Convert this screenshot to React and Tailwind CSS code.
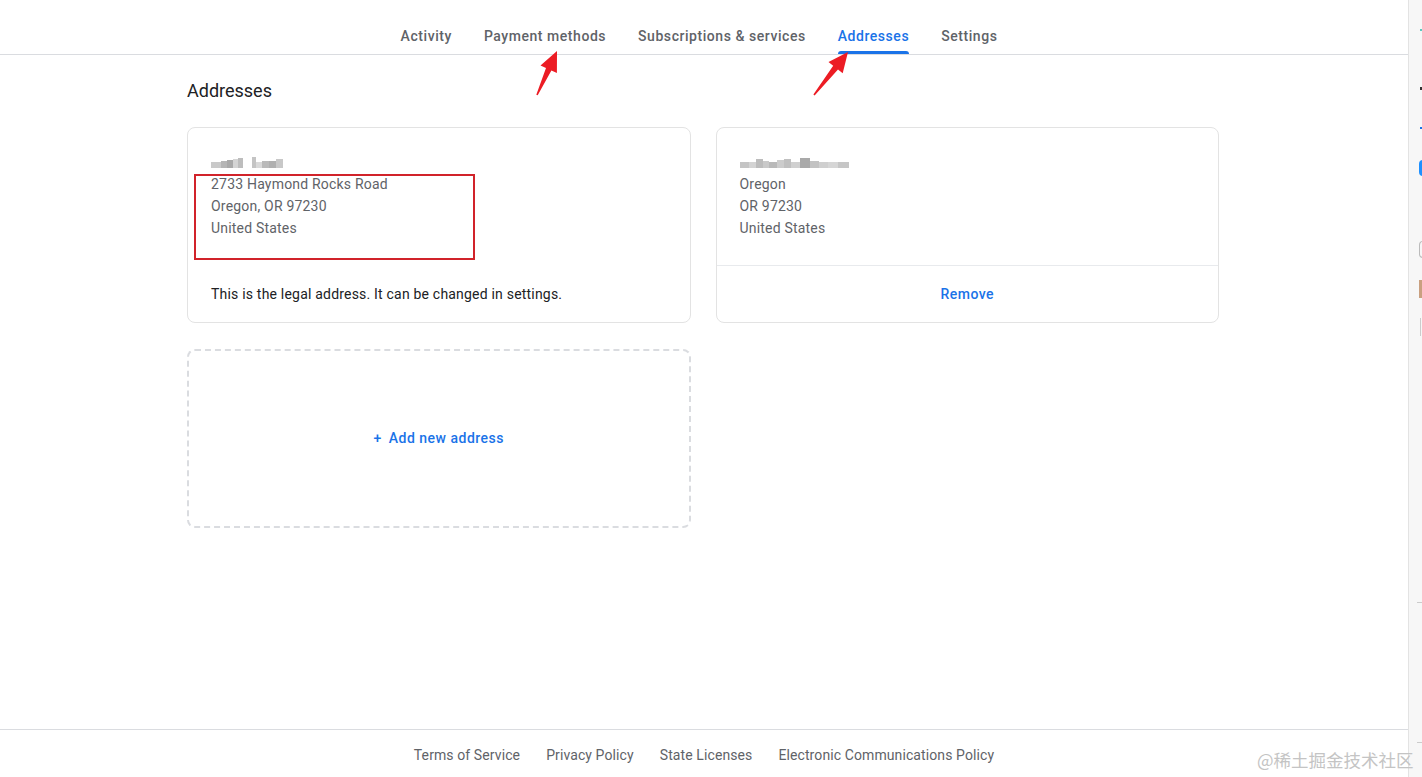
import React from 'react'

const tabs = ['Activity', 'Payment methods', 'Subscriptions & services', 'Addresses', 'Settings']

// 모자이크 처리된 이름
function Pixelated({ blocks }) {
  return (
    <div className="flex items-end h-[22px] pb-[5px]">
      {blocks.map(([w, h, c], i) => (
        <span key={i} style={{ width: w, height: h, background: c }} className="inline-block" />
      ))}
    </div>
  )
}

const name1 = [
  [10, 6, '#c9c9c9'], [6, 7, '#b5b5b5'], [6, 8, '#a9a9a9'], [5, 9, '#d4d4d4'], [5, 10, '#bdbdbd'],
  [9, 3, '#ffffff'], [4, 11, '#c4c4c4'], [6, 6, '#d9d9d9'], [7, 7, '#bababa'], [7, 7, '#b0b0b0'], [7, 9, '#c8c8c8']
]
const name2 = [
  [9, 6, '#c4c4c4'], [7, 6, '#d3d3d3'], [7, 9, '#bcbcbc'], [6, 7, '#c9c9c9'], [8, 6, '#b9b9b9'],
  [7, 8, '#cccccc'], [7, 9, '#c0c0c0'], [9, 6, '#d0d0d0'], [10, 10, '#a9a9a9'], [9, 7, '#c2c2c2'],
  [9, 6, '#cfcfcf'], [10, 6, '#d6d6d6'], [11, 6, '#c6c6c6']
]

function App() {
  return (
    <div className="relative flex w-full min-h-[777px] bg-white text-[14px]" style={{ fontFamily: 'Roboto, "Liberation Sans", sans-serif' }}>
      <div className="flex-1 flex flex-col min-h-[777px]">
        {/* 탭 */}
        <nav className="h-[55px] border-b border-[#dadce0] flex justify-center pr-[10px]">
          <div className="flex gap-8 tracking-[0.55px]">
            {tabs.map((t) => (
              <div key={t} className="flex flex-col items-stretch pt-[26px]">
                <span className={`leading-5 font-medium ${t === 'Addresses' ? 'text-[#1a73e8]' : 'text-[#5f6368]'}`}>{t}</span>
                <span className={`mt-[5px] h-[3px] rounded-t-[3px] ${t === 'Addresses' ? 'bg-[#1a73e8]' : 'bg-transparent'}`} />
              </div>
            ))}
          </div>
        </nav>

        <main className="flex-1 pr-[2px]">
          <div className="w-[1032px] mx-auto tracking-[0.2px]">
            <h2 className="mt-[24px] text-[18px] leading-6 text-[#202124] tracking-normal">Addresses</h2>

            <div className="mt-[24px] grid grid-cols-2 gap-x-[25px] gap-y-[26px]">
              {/* 첫번째 주소 */}
              <div className="relative h-[196px] border border-[#e3e3e3] rounded-[8px] flex flex-col">
                <div className="pt-[23px] pl-[23px] pb-[26px] leading-[22px] text-[#5f6368] border-b border-transparent">
                  <Pixelated blocks={name1} />
                  <div>2733 Haymond Rocks Road</div>
                  <div>Oregon, OR 97230</div>
                  <div>United States</div>
                </div>
                <div className="flex-1 flex items-center pl-[23px] pt-[1px] text-[#202124]">
                  This is the legal address. It can be changed in settings.
                </div>
                <div className="absolute left-[6px] top-[46px] w-[281px] h-[86px] border-2 border-[#d1232a]" />
              </div>

              {/* 두번째 주소 */}
              <div className="h-[196px] border border-[#e3e3e3] rounded-[8px] flex flex-col">
                <div className="pt-[23px] pl-[23px] pb-[26px] leading-[22px] text-[#5f6368] border-b border-[#e8eaed]">
                  <Pixelated blocks={name2} />
                  <div>Oregon</div>
                  <div>OR 97230</div>
                  <div>United States</div>
                </div>
                <div className="flex-1 flex items-center justify-center text-[#1a73e8] font-medium tracking-[0.5px]">Remove</div>
              </div>

              {/* 주소 추가 */}
              <div className="h-[179px] border-2 border-dashed border-[#dadce0] rounded-[8px] flex items-center justify-center text-[#1a73e8] font-medium tracking-[0.5px]">
                <span className="mr-[7px]">+</span>Add new address
              </div>
            </div>
          </div>
        </main>

        <footer className="h-[48px] border-t border-[#dadce0] flex justify-center gap-[26px] pt-[15px] text-[#5f6368] leading-5 tracking-[0.1px]">
          <span>Terms of Service</span>
          <span>Privacy Policy</span>
          <span>State Licenses</span>
          <span>Electronic Communications Policy</span>
        </footer>
      </div>

      {/* 오른쪽 사이드 패널 */}
      <div className="w-[14px] bg-[#f7f7f7] border-l border-[#e3e3e3] relative">
        <span className="absolute left-[11px] top-[29px] w-[3px] h-[2px] bg-[#5cc9c0]" />
        <span className="absolute left-[11px] top-[87px] w-[3px] h-[3px] bg-[#333]" />
        <span className="absolute left-[11px] top-[127px] w-[3px] h-[2px] bg-[#1a73e8]" />
        <span className="absolute left-[10px] top-[160px] w-[4px] h-[16px] rounded-l bg-[#1e90ff]" />
        <span className="absolute left-[10px] top-[241px] w-[4px] h-[17px] rounded-l border border-[#bbb]" />
        <span className="absolute left-[10px] top-[280px] w-[4px] h-[18px] bg-[#c9a080]" />
        <span className="absolute left-[11px] top-[318px] w-[3px] h-[18px] border-l border-[#ccc]" />
        <span className="absolute left-[8px] top-[602px] w-[6px] h-[1px] bg-[#ccc]" />
        <span className="absolute left-[8px] top-[742px] w-[6px] h-[1px] bg-[#ccc]" />
      </div>

      {/* 화살표 주석 */}
      <svg className="absolute left-0 top-0 pointer-events-none" width="1422" height="777">
        <polygon fill="#ec1c24" points="557,51 556.9,72.9 551.4,70.4 537.7,95.3 536.3,94.7 546,68 540.5,65.5" />
        <polygon fill="#ec1c24" points="848,52 842.7,73.3 838,69.6 814.6,95.5 813.4,94.5 833.2,65.8 828.5,62.1" />
      </svg>

      <div className="absolute left-[1257px] top-[748px] text-[17.5px] leading-[24px] text-[#c4c4c4] whitespace-nowrap" style={{ fontFamily: '"Noto Sans CJK SC", sans-serif' }}>
        @稀土掘金技术社区
      </div>
    </div>
  )
}

export default App
